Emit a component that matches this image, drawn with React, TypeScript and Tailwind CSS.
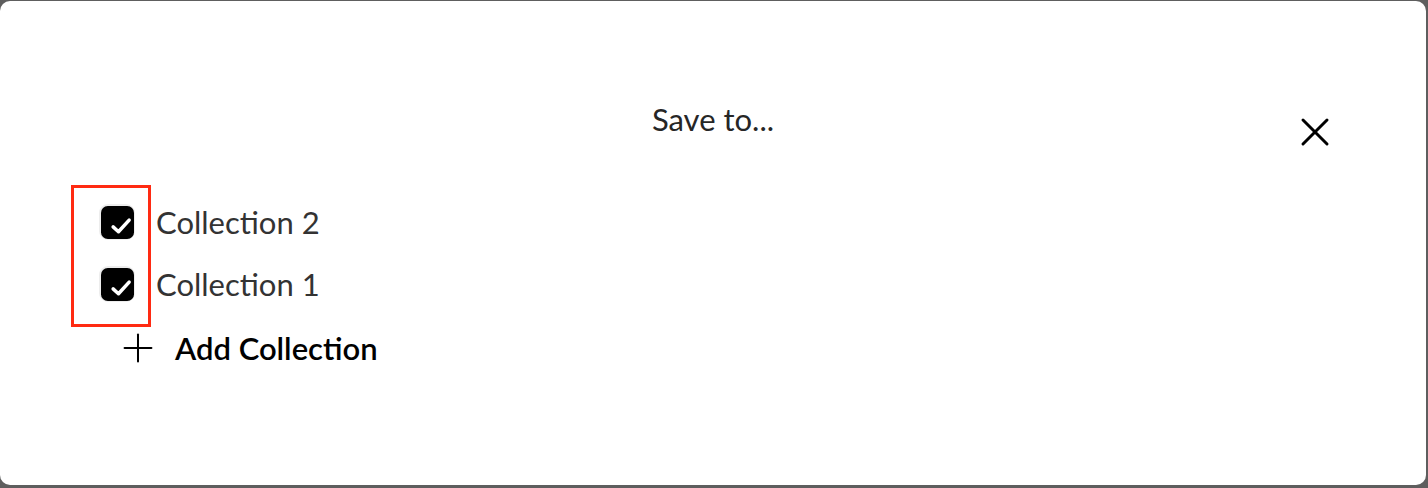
import {Plus, X} from "lucide-react";

const collections = ["Collection 2", "Collection 1"];

function CheckBox() {
    return (
        <span className="flex h-[36px] w-[36px] items-center justify-center rounded-[9px] bg-[#ededed]">
            <svg viewBox="0 0 34 34" className="h-[33px] w-[33px]">
                <rect x="0" y="0" width="34" height="34" rx="7" fill="#000"/>
                <polyline points="12.5,21.5 18,26.5 29,14.5" fill="none" stroke="#fff" strokeWidth="3.6"
                          strokeLinecap="round" strokeLinejoin="round"/>
            </svg>
        </span>
    );
}

export default function App() {
    return (
        <div className="h-[488px] w-full bg-[#5e5e5e] pt-px pr-[2px] pb-[3px]" style={{fontFamily: "Lato, 'Open Sans', sans-serif"}}>
            <div className="relative h-full w-full rounded-[10px] bg-white">
                <div className="flex h-[150px] items-start justify-center pt-[98px]">
                    <h2 className="text-[31px] leading-[40px] text-[#262626]">Save to...</h2>
                </div>
                <button className="absolute top-[107px] right-[87px] text-black">
                    <X className="h-[48px] w-[48px]" strokeWidth={1.5}/>
                </button>

                <div className="relative flex flex-col pl-[99px] pt-[40px]">
                    <div className="absolute top-[34px] left-[71px] h-[142px] w-[80px] border-[3px] border-[#ff2a12]"/>
                    {collections.map((name) => (
                        <label key={name} className="flex h-[62px] items-center gap-[21px]">
                            <CheckBox/>
                            <span className="text-[31px] text-[#333333]">{name}</span>
                        </label>
                    ))}
                    <button className="ml-[16px] flex h-[66px] items-center gap-[14px] text-black">
                        <Plus className="h-[46px] w-[46px]" strokeWidth={1.05}/>
                        <span className="text-[31px] font-semibold">Add Collection</span>
                    </button>
                </div>
            </div>
        </div>
    );
}
